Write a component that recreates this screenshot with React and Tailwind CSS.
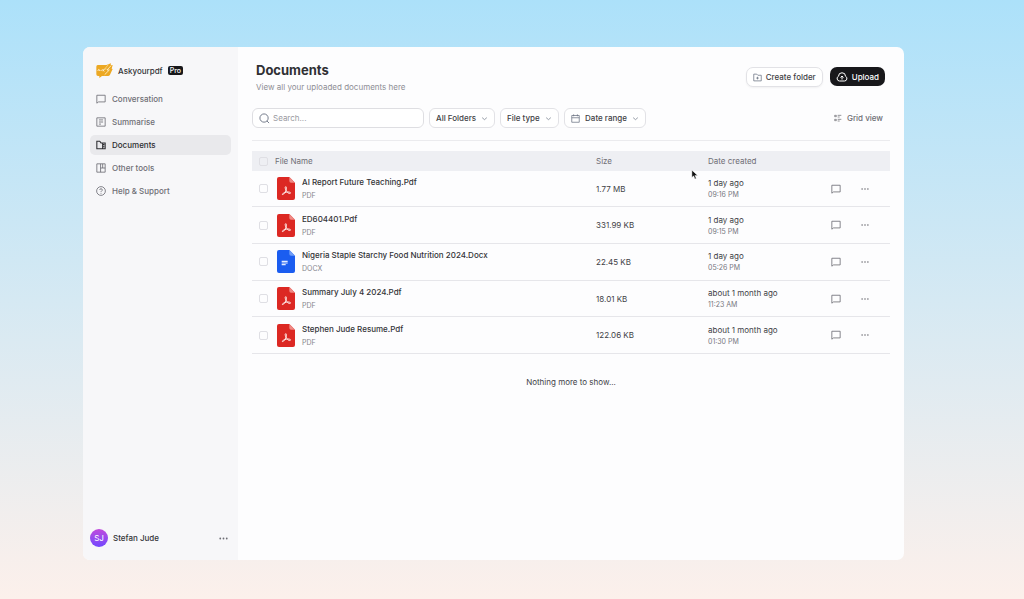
import React, { useState } from 'react';

const files = [
  { id: 1, name: 'AI Report Future Teaching.Pdf', type: 'PDF', size: '1.77 MB', date: '1 day ago', time: '09:16 PM' },
  { id: 2, name: 'ED604401.Pdf', type: 'PDF', size: '331.99 KB', date: '1 day ago', time: '09:15 PM' },
  { id: 3, name: 'Nigeria Staple Starchy Food Nutrition 2024.Docx', type: 'DOCX', size: '22.45 KB', date: '1 day ago', time: '05:26 PM' },
  { id: 4, name: 'Summary July 4 2024.Pdf', type: 'PDF', size: '18.01 KB', date: 'about 1 month ago', time: '11:23 AM' },
  { id: 5, name: 'Stephen Jude Resume.Pdf', type: 'PDF', size: '122.06 KB', date: 'about 1 month ago', time: '01:30 PM' },
];

const Icon = ({ className = 'w-[10px] h-[10px]', strokeWidth = 2, children }) => (
  <svg className={`${className} shrink-0`} viewBox="0 0 24 24" fill="none" stroke="currentColor" strokeWidth={strokeWidth} aria-hidden="true">
    {children}
  </svg>
);

const ChatIcon = (props) => (
  <Icon {...props}>
    <path d="M2 3h20v16H6l-4 3z" />
  </Icon>
);

const ChevronIcon = () => (
  <Icon className="w-[7px] h-[7px] text-gray-500" strokeWidth={2.4}>
    <path d="M4 9l8 7 8-7" />
  </Icon>
);

const DotsIcon = ({ className = 'w-[9px] h-[9px]' }) => (
  <svg className={className} viewBox="0 0 18 18" fill="currentColor" aria-hidden="true">
    <circle cx="2.5" cy="9" r="1.8" />
    <circle cx="9" cy="9" r="1.8" />
    <circle cx="15.5" cy="9" r="1.8" />
  </svg>
);

const Logo = () => (
  <svg className="w-[17px] h-[15px] shrink-0" viewBox="0 0 51 45" aria-hidden="true">
    <path d="M5 6h26l14-5-1 6 6-1-3 11 3 1-8 17q-2 4-6 4H18l-8 6v-6H6q-5 0-5-5V11q0-5 4-5z" fill="#eca823" />
    <path d="M45 8L33 21h7L26 35" fill="none" stroke="#fff3d2" strokeWidth="2.5" />
    <path d="M37 5L26 18h6" fill="none" stroke="#fff3d2" strokeWidth="1.5" />
    <path d="M6 24v-3q3-4 5 0v3M14 24l4-4M21 18v7m5-6l-4 3 3 3" fill="none" stroke="#fff8e6" strokeWidth="2.4" />
  </svg>
);

const navItems = [
  { label: 'Conversation', icon: <ChatIcon /> },
  {
    label: 'Summarise',
    icon: (
      <Icon>
        <path d="M2 2h20v20H2zM7 7h10M7 12h10M7 17h5" />
      </Icon>
    ),
  },
  {
    label: 'Documents',
    active: true,
    icon: (
      <Icon strokeWidth={2.6}>
        <path d="M2 3h7l3 4h10v14H2zM16 7v14M16 11h4M16 16h4" />
      </Icon>
    ),
  },
  {
    label: 'Other tools',
    icon: (
      <Icon>
        <path d="M2 2h20v20H2zM11 2v20M11 12h11M16 2v10" />
      </Icon>
    ),
  },
  {
    label: 'Help & Support',
    icon: (
      <Icon>
        <circle cx="12" cy="12" r="10.5" />
        <path d="M9 9.5q0-3 3-3t3 3q0 1.5-1.5 2.5T12 14.5M12 16.5v2" />
      </Icon>
    ),
  },
];

const FileIcon = ({ type }) => (
  <svg className="w-[18px] h-[23px] shrink-0" viewBox="0 0 54 69" aria-hidden="true">
    <path d="M6 0h31l17 17v46q0 6-6 6H6q-6 0-6-6V6q0-6 6-6z" fill={type === 'PDF' ? '#dc2823' : '#1b5df0'} />
    <path d="M37 0l17 17H42q-5 0-5-5z" fill={type === 'PDF' ? '#ef8984' : '#6f9df7'} />
    {type === 'PDF' ? (
      <path
        d="M26 29c-3 1-1 8 3 14 3 5 8 8 11 6 2-2-1-4-7-4-7 0-14 3-17 6-1 3 3 2 6-2 3-4 7-12 6-18 0-1-1-2-2-2z"
        fill="none"
        stroke="#ffece9"
        strokeWidth="3"
      />
    ) : (
      <path d="M14 34h18M14 39h18M14 44h12" stroke="#e3ecff" strokeWidth="3.5" />
    )}
  </svg>
);

const Checkbox = ({ label, checked, onChange }) => (
  <input
    type="checkbox"
    aria-label={label}
    checked={checked}
    onChange={onChange}
    className="block mx-auto w-[9px] h-[9px] appearance-none rounded-[2px] border border-[#dfdfe4] bg-transparent checked:bg-gray-800"
  />
);

const Sidebar = () => (
  <aside className="w-[155px] shrink-0 bg-[#f7f7f9] flex flex-col px-[7px] pt-4 pb-[13px]">
    <div className="flex items-center pl-[6px] h-[15px]">
      <Logo />
      <span className="ml-[5px] text-[8px] font-medium text-[#333337]">Askyourpdf</span>
      <span className="ml-[5px] h-[9px] px-[2px] rounded-[2px] bg-[#18181b] text-white text-[7px] leading-[9px] font-medium">Pro</span>
    </div>

    <nav className="mt-[11px] flex flex-col gap-[3px]">
      {navItems.map((item) => (
        <a
          key={item.label}
          href="#"
          className={`flex items-center gap-[6px] h-5 pl-[6px] rounded-[5px] text-[8px] font-medium ${item.active ? 'bg-[#e9e9ec] text-[#2c2c30]' : 'text-[#6e6e75]'}`}
        >
          {item.icon}
          {item.label}
        </a>
      ))}
    </nav>

    <div className="mt-auto flex items-center">
      <span className="w-[18px] h-[18px] rounded-full bg-linear-to-b from-[#c048dc] to-[#7145ff] text-white text-[8px] flex items-center justify-center">SJ</span>
      <span className="ml-[5px] text-[8px] font-medium text-[#333337]">Stefan Jude</span>
      <button aria-label="Account menu" className="ml-auto mr-[3px] text-[#6e6e75]">
        <DotsIcon />
      </button>
    </div>
  </aside>
);

const filterClass = 'flex items-center justify-between h-5 px-[6px] rounded-[6px] border border-[#e2e2e6] bg-white text-[8px] font-medium text-[#3f3f46]';

const Toolbar = () => (
  <div className="mt-[13px] flex items-center gap-[5px]">
    <label className="flex items-center gap-[3px] w-[172px] h-5 px-[6px] rounded-[6px] border border-[#dedee2] bg-white">
      <Icon className="w-[11px] h-[11px] text-gray-500">
        <circle cx="11" cy="11" r="9" />
        <path d="M17.5 17.5l4.5 4.5" />
      </Icon>
      <input type="text" aria-label="Search" placeholder="Search..." className="w-full min-w-0 text-[8px] outline-none placeholder:text-[#9a9aa1]" />
    </label>
    <button className={`${filterClass} w-[66px]`}>
      All Folders <ChevronIcon />
    </button>
    <button className={`${filterClass} w-[59px]`}>
      File type <ChevronIcon />
    </button>
    <button className={`${filterClass} w-[82px]`}>
      <Icon className="w-[9px] h-[9px] text-gray-500">
        <path d="M2 4h20v18H2zM2 10h20M7 1v5M17 1v5" />
      </Icon>
      Date range <ChevronIcon />
    </button>
    <button className="ml-auto mr-[7px] flex items-center gap-[5px] text-[8px] font-medium text-[#6e6e75]">
      <Icon className="w-2 h-2" strokeWidth={2.2}>
        <path d="M2 4h5v4H2zM2 16h5v4H2zM11 4h11M11 9h6M11 16h11M11 21h6" />
      </Icon>
      Grid view
    </button>
  </div>
);

const FileTable = () => {
  const [selected, setSelected] = useState([]);

  const toggle = (id) => {
    setSelected(selected.includes(id) ? selected.filter((s) => s !== id) : [...selected, id]);
  };
  const toggleAll = () => setSelected(selected.length === files.length ? [] : files.map((f) => f.id));

  return (
    <table className="w-full h-[203px] table-fixed border-collapse text-left text-[8px] text-[#3f3f46]">
      <thead>
        <tr className="h-5 bg-[#eeeff3] text-[#6e6e75]">
          <th className="w-[23px]">
            <Checkbox label="Select all files" checked={selected.length === files.length} onChange={toggleAll} />
          </th>
          <th className="font-normal">File Name</th>
          <th className="w-[112px] font-normal">Size</th>
          <th className="w-[112px] font-normal">Date created</th>
          <th className="w-[70px]" aria-label="Actions" />
        </tr>
      </thead>
      <tbody>
        {files.map((file) => (
          <tr key={file.id} className="border-b border-[#e6e6ea]">
            <td>
              <Checkbox label={`Select ${file.name}`} checked={selected.includes(file.id)} onChange={() => toggle(file.id)} />
            </td>
            <td>
              <div className="flex items-center gap-[7px] pl-[2px]">
                <FileIcon type={file.type} />
                <div>
                  <p className="leading-3 font-medium text-[#333337]">{file.name}</p>
                  <p className="mt-[2px] text-[7px] leading-[11px] text-[#85858c]">{file.type}</p>
                </div>
              </div>
            </td>
            <td>{file.size}</td>
            <td>
              <p className="leading-3">{file.date}</p>
              <p className="text-[7px] leading-[11px] text-[#77777e]">{file.time}</p>
            </td>
            <td>
              <div className="flex items-center gap-5 pl-[11px] text-[#6e6e75]">
                <button aria-label={`Chat with ${file.name}`}>
                  <ChatIcon />
                </button>
                <button aria-label={`More options for ${file.name}`}>
                  <DotsIcon className="w-2 h-2" />
                </button>
              </div>
            </td>
          </tr>
        ))}
      </tbody>
    </table>
  );
};

const App = () => (
  <div className="relative min-h-screen flex pt-[47px] pb-[39px] pl-[83px] pr-[120px] bg-linear-to-b from-[#ace1fa] to-[#fcf0eb] font-['Inter',sans-serif]">
    <div className="flex-1 flex rounded-[7px] overflow-hidden bg-[#fdfdfe]">
      <Sidebar />

      <main className="flex-1 min-w-0 px-[14px] pt-[14px]">
        <header className="flex items-start justify-between pl-1 pr-[5px]">
          <div>
            <h1 className="text-[13px] leading-[18px] font-bold text-[#303034]">Documents</h1>
            <p className="text-[8px] leading-4 text-[#8e8e95]">View all your uploaded documents here</p>
          </div>
          <div className="flex gap-[7px] mt-[6px]">
            <button className="flex items-center gap-1 h-5 px-[6px] rounded-[7px] border border-[#e2e2e6] bg-white shadow-xs text-[8px] font-medium text-[#3f3f46]">
              <Icon className="w-[9px] h-[9px] text-gray-500">
                <path d="M2 3h8l3 3h9v15H2zM12 10v7M8.5 13.5h7" />
              </Icon>
              Create folder
            </button>
            <button className="flex items-center gap-1 h-[19px] px-[6px] rounded-[7px] bg-[#18181b] text-[8px] font-medium text-white">
              <Icon className="w-3 h-3">
                <path d="M7 20a5 5 0 0 1-2-9.500 7 7 0 0 1 14 0A5 5 0 0 1 17 20zM12 17v-7M9 13l3-3 3 3" />
              </Icon>
              Upload
            </button>
          </div>
        </header>

        <Toolbar />
        <hr className="mt-3 mb-[10px] border-[#ebebee]" />
        <FileTable />
        <p className="mt-[22px] text-center text-[8px] leading-3 text-[#3f3f46]">Nothing more to show...</p>
      </main>
    </div>

    {/* Pointer */}
    <svg className="absolute left-[691px] top-[169px] w-[7px] h-[11px]" viewBox="0 0 16 24" aria-hidden="true">
      <path d="M2 2v17l4-4 3 7 3-1-3-7h6z" fill="#111" stroke="#fff" strokeWidth="1" />
    </svg>
  </div>
);

export default App;
